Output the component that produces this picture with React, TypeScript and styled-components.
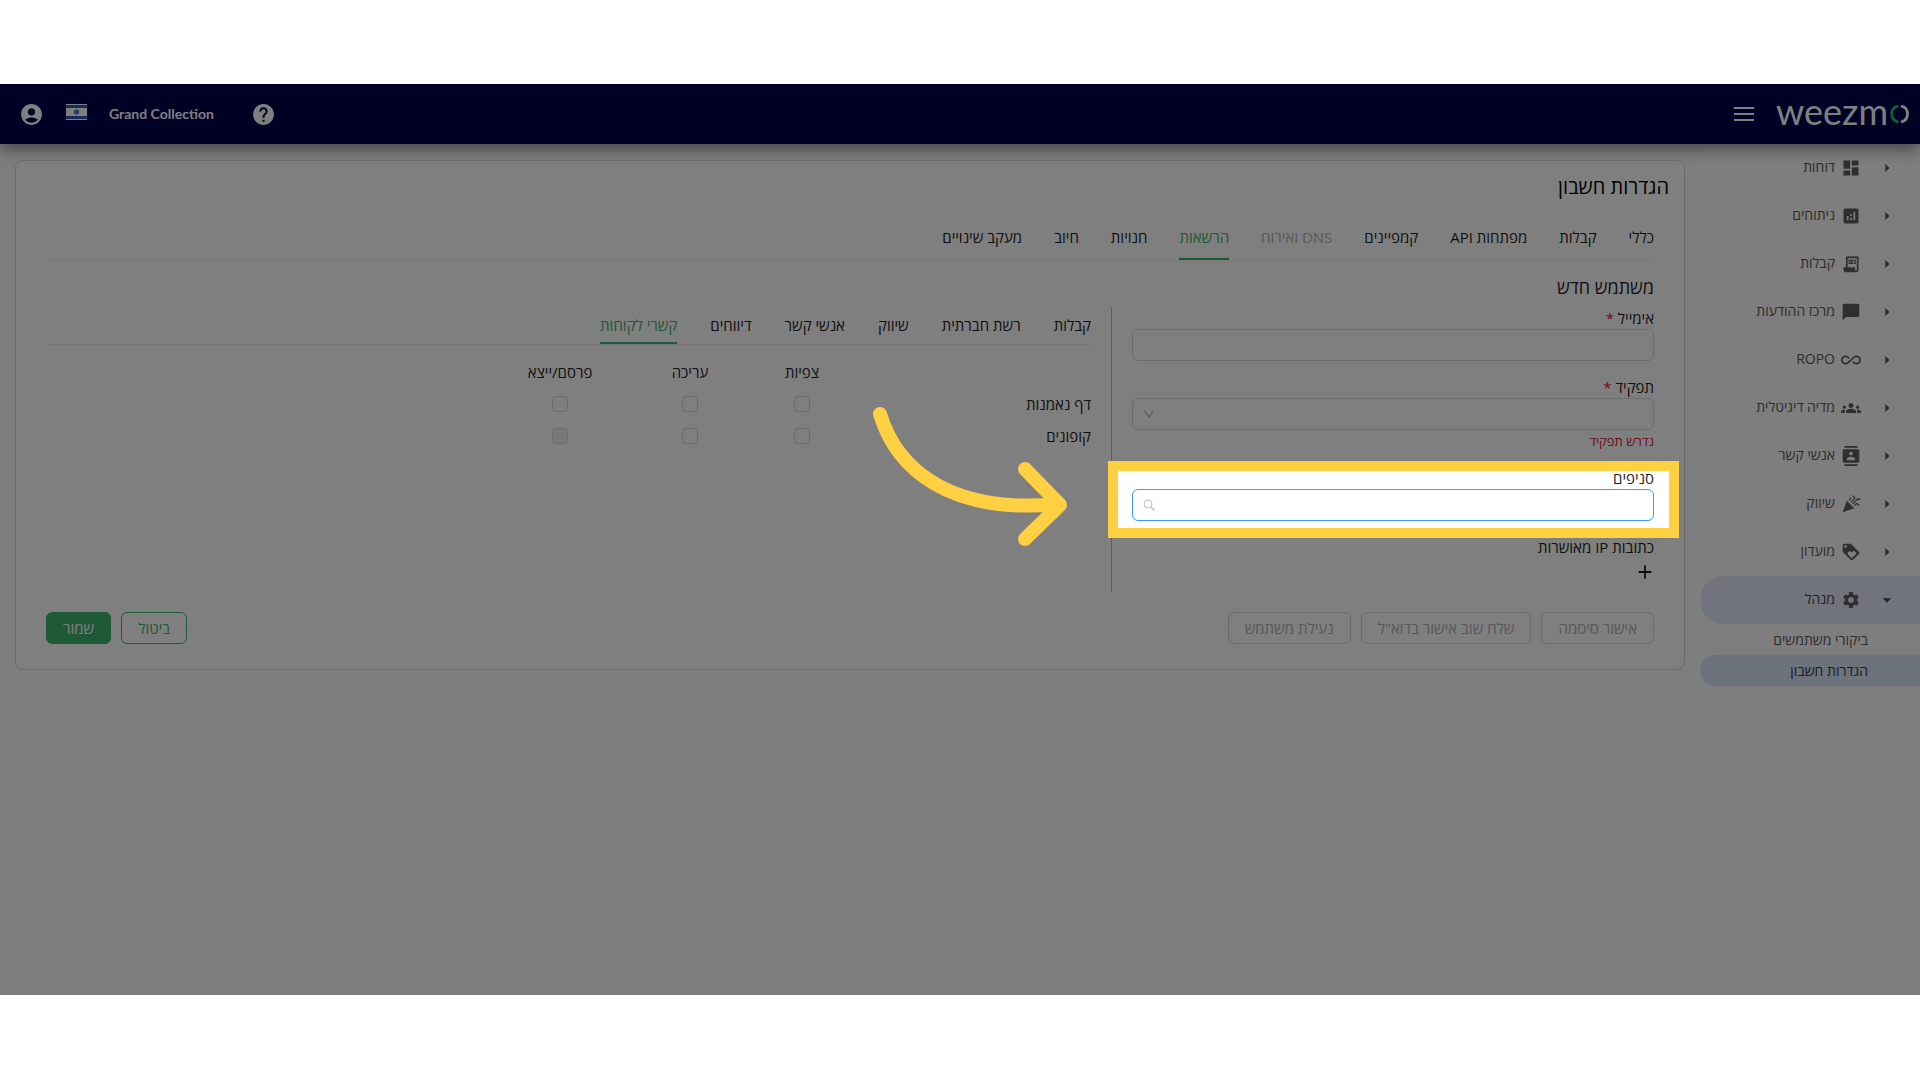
import React, { useState } from "react";
import styled, { createGlobalStyle, css } from "styled-components";
import type { IconType } from "react-icons";
import {
  MdAccountCircle,
  MdAdd,
  MdAllInclusive,
  MdAnalytics,
  MdArrowDropDown,
  MdArrowRight,
  MdCelebration,
  MdChatBubble,
  MdContacts,
  MdDashboard,
  MdGroups,
  MdHelp,
  MdLoyalty,
  MdReceiptLong,
  MdSettings,
} from "react-icons/md";

const color = {
  navy: "#00004e",
  green: "#3cb371",
  text: "#1f1f1f",
  menu: "#5a5a5a",
  muted: "#b4b4b4",
  border: "#d9d9d9",
  line: "#f0f0f0",
  error: "#e01030",
  focus: "#4096ff",
  highlight: "#ffd042",
};

const GlobalStyle = createGlobalStyle`
  *, *::before, *::after { box-sizing: border-box; }
  body {
    margin: 0;
    background: #ffffff;
    color: ${color.text};
    font-family: "Open Sans", "Noto Sans", "Liberation Sans", sans-serif;
    font-size: 15px;
    line-height: 22px;
  }
  button, input, select { font: inherit; color: inherit; }
`;

const Page = styled.div`
  min-height: 100vh;
  display: flex;
  flex-direction: column;
  padding: 84px 0 85px;
`;

const Stage = styled.div`
  position: relative;
  flex: 1;
  display: flex;
  flex-direction: column;
  overflow: hidden;
  background: #f9fefc;
`;

const TopBar = styled.header`
  position: relative;
  z-index: 1;
  display: flex;
  align-items: center;
  justify-content: space-between;
  height: 60px;
  padding: 0 11px 0 19px;
  background: ${color.navy};
  color: #ffffff;
  box-shadow: 0 4px 16px rgba(0, 0, 0, 0.5);
`;

const BarGroup = styled.div`
  display: flex;
  align-items: center;
  gap: 22px;
`;

const IconButton = styled.button`
  display: flex;
  padding: 0;
  border: 0;
  background: none;
  cursor: pointer;
`;

const Brand = styled.a`
  display: flex;
  align-items: center;
  gap: 2px;
  direction: ltr;
  color: #ffffff;
  font-family: Lato, sans-serif;
  font-size: 36px;
  font-weight: 400;
  line-height: 48px;
  text-decoration: none;
`;

const BrandWord = styled.span`
  padding-bottom: 6px;
`;

const Account = styled.span`
  margin-right: 15px;
  font-family: Lato, sans-serif;
  font-weight: 700;
  font-size: 14px;
`;

const FlagImage = styled.svg`
  margin-bottom: 4px;
`;

const Body = styled.div`
  flex: 1;
  display: flex;
`;

const Sidebar = styled.nav`
  flex: 0 0 220px;
  background: #fdfdfd;
  font-size: 14px;
`;

const MenuItem = styled.button<{ $open?: boolean }>`
  display: flex;
  align-items: center;
  width: 100%;
  height: 48px;
  padding: 0 23px 0 0;
  border: 0;
  border-radius: 24px 0 0 24px;
  background: ${(p) => (p.$open ? "#e4e9fb" : "none")};
  color: ${(p) => (p.$open ? "#444444" : color.menu)};
  cursor: pointer;
`;

const MenuIcon = styled.span`
  display: flex;
  margin: 0 16px 0 6px;
  color: #5f5f5f;
`;

const MenuLabel = styled.span`
  padding-bottom: 2px;
`;

const SubItem = styled.a<{ $active?: boolean }>`
  display: block;
  padding: 5px 52px 4px 0;
  border-radius: 16px 0 0 16px;
  background: ${(p) => (p.$active ? "#d8e6fa" : "none")};
  color: ${(p) => (p.$active ? "#3a3a3a" : color.menu)};
  text-decoration: none;
`;

const Main = styled.main`
  flex: 1;
  min-width: 0;
  padding: 16px 15px;
`;

const Card = styled.section`
  padding: 12px 30px 25px;
  border: 1px solid ${color.border};
  border-radius: 8px;
  background: #ffffff;
`;

const Title = styled.h1`
  margin: 0 -15px 14px 0;
  color: #000000;
  font-size: 20px;
  font-weight: 400;
  line-height: 28px;
`;

const Tabs = styled.div<{ $compact?: boolean }>`
  display: flex;
  gap: ${(p) => (p.$compact ? 33 : 32)}px;
  height: ${(p) => (p.$compact ? 38 : 46)}px;
  margin-left: 3px;
  border-bottom: 1px solid ${color.line};
`;

const Tab = styled.button`
  height: 100%;
  padding: 0;
  border: 0;
  border-bottom: 2px solid transparent;
  background: none;
  cursor: pointer;

  ${(p) =>
    p["aria-selected"] &&
    css`
      border-color: ${color.green};
      color: ${color.green};
    `}

  &:disabled {
    color: ${color.muted};
    cursor: default;
  }
`;

const SubTitle = styled.h2`
  margin: 14px 0 8px;
  font-size: 18px;
  font-weight: 400;
  line-height: 24px;
`;

const Columns = styled.div`
  display: grid;
  grid-template-columns: 542fr 1063fr;
`;

const FormColumn = styled.div`
  display: flex;
  flex-direction: column;
  gap: 15px;
  padding: 0 0 6px 20px;
  border-left: 1px solid #b8b8b8;
`;

const Field = styled.div`
  position: relative;
  display: flex;
  flex-direction: column;
`;

const Label = styled.label`
  align-self: flex-start;
`;

const Required = styled.span`
  color: ${color.error};
`;

const ControlBox = styled.div`
  display: grid;
  align-items: center;

  > * {
    grid-area: 1 / 1;
  }

  > svg {
    justify-self: end;
    margin-left: 11px;
    pointer-events: none;
  }
`;

const control = css<{ $focused?: boolean }>`
  width: 100%;
  height: 32px;
  padding: 0 11px;
  border: 1px solid ${(p) => (p.$focused ? color.focus : color.border)};
  border-radius: 6px;
  background: #ffffff;
  outline: none;
`;

const TextInput = styled.input<{ $focused?: boolean }>`
  ${control}
`;

const Select = styled.select<{ $focused?: boolean }>`
  ${control}
  appearance: none;
`;

const ErrorText = styled.p`
  margin: 0;
  color: ${color.error};
  font-size: 13px;
`;

const AddButton = styled(IconButton)`
  align-self: flex-start;
  align-items: center;
  height: 28px;
  margin-right: -2px;
`;

const Spotlight = styled.div`
  position: absolute;
  z-index: 10;
  inset: -6px -25px -17px -24px;
  border: 10px solid ${color.highlight};
  box-shadow: 0 0 0 3000px rgba(0, 0, 0, 0.5);
  pointer-events: none;
`;

const Arrow = styled.svg`
  position: absolute;
  z-index: 11;
  right: calc(100% + 64px);
  top: -62px;
  pointer-events: none;
`;

const Permissions = styled.div`
  padding-right: 20px;
`;

const PermissionTable = styled.table`
  margin-top: 11px;
  border-collapse: collapse;
  table-layout: fixed;

  th,
  td {
    height: 32px;
    padding: 0;
    font-weight: 400;
    text-align: center;
  }

  tbody th {
    text-align: right;
  }
`;

const Checkbox = styled.input`
  display: block;
  width: 16px;
  height: 16px;
  margin: 0 auto;
  appearance: none;
  border: 1px solid ${color.border};
  border-radius: 4px;
  background: #ffffff;

  &:checked {
    border-color: ${color.green};
    background: ${color.green};
  }

  &:disabled {
    background: #f2f2f2;
  }
`;

const Footer = styled.footer`
  display: flex;
  justify-content: space-between;
  margin-top: 20px;
`;

const Actions = styled.div`
  display: flex;
  gap: 10px;
`;

const Button = styled.button<{ $kind?: "primary" | "outline" }>`
  height: 32px;
  padding: 0 16px;
  border: 1px solid ${(p) => (p.$kind ? color.green : color.border)};
  border-radius: 6px;
  background: ${(p) => (p.$kind === "primary" ? color.green : "#ffffff")};
  color: ${(p) => (p.$kind === "primary" ? "#ffffff" : color.green)};
  cursor: pointer;

  &:disabled {
    color: #b0b0b0;
    cursor: default;
  }
`;

type MenuEntry = { label: string; icon: IconType; open?: boolean };

const menu: MenuEntry[] = [
  { label: "דוחות", icon: MdDashboard },
  { label: "ניתוחים", icon: MdAnalytics },
  { label: "קבלות", icon: MdReceiptLong },
  { label: "מרכז ההודעות", icon: MdChatBubble },
  { label: "ROPO", icon: MdAllInclusive },
  { label: "מדיה דיגיטלית", icon: MdGroups },
  { label: "אנשי קשר", icon: MdContacts },
  { label: "שיווק", icon: MdCelebration },
  { label: "מועדון", icon: MdLoyalty },
  { label: "מנהל", icon: MdSettings, open: true },
];

const accountTabs = ["כללי", "קבלות", "מפתחות API", "קמפיינים", "DNS ואירוח", "הרשאות", "חנויות", "חיוב", "מעקב שינויים"];
const permissionTabs = ["קבלות", "רשת חברתית", "שיווק", "אנשי קשר", "דיווחים", "קשרי לקוחות"];
const permissionColumns = ["צפיות", "עריכה", "פרסם/ייצא"];
const permissionRows = [
  { label: "דף נאמנות", locked: -1 },
  { label: "קופונים", locked: 2 },
];

function Flag() {
  return (
    <FlagImage width="21" height="16" viewBox="0 0 21 16" role="img" aria-label="ישראל">
      <rect width="21" height="16" fill="#ffffff" />
      <rect y="1" width="21" height="3" fill="#2a57b0" />
      <rect y="12" width="21" height="3" fill="#2a57b0" />
      <path d="M10.500 5.500l2.200 3.700H8.300z M10.500 10.500l-2.200-3.700h4.400z" fill="none" stroke="#2a57b0" />
    </FlagImage>
  );
}

function MenuLines() {
  return (
    <svg width="20" height="16" viewBox="0 0 20 16" fill="none" stroke="#ffffff" strokeWidth="2" aria-hidden>
      <path d="M0 2h20M0 8h20M0 14h20" />
    </svg>
  );
}

function BrandMark() {
  return (
    <svg width="19" height="18" viewBox="0 0 19 18" fill="none" strokeWidth="2.800" aria-hidden>
      <path d="M8.500 1C4 2 1.700 5.300 1.700 9s2.300 7 6.800 8" stroke="#12c46c" />
      <path d="M11 1c4.300 1 6.500 4.300 6.500 8s-2.200 7-6.500 8" stroke="#ffffff" />
    </svg>
  );
}

function Chevron() {
  return (
    <svg width="12" height="12" viewBox="0 0 12 12" fill="none" stroke="#b0b0b0" aria-hidden>
      <path d="M1.500 2.500L6 9l4.500-6.500" strokeWidth="1.200" />
    </svg>
  );
}

function SearchGlyph() {
  return (
    <svg width="12" height="12" viewBox="0 0 12 12" fill="none" stroke="#bcbcbc" aria-hidden>
      <circle cx="5" cy="5" r="4" />
      <path d="M8 8l3.500 3.500" strokeWidth="1.400" />
    </svg>
  );
}

function CurvedArrow() {
  return (
    <Arrow width="196" height="144" viewBox="0 0 196 144" fill="none" stroke={color.highlight} strokeWidth="14" strokeLinecap="round" strokeLinejoin="round" aria-hidden>
      <path d="M8 9c16 53 67 101 179 90" />
      <path d="M153 64l35 36-35 34" />
    </Arrow>
  );
}

export default function App() {
  const [accountTab, setAccountTab] = useState("הרשאות");
  const [permissionTab, setPermissionTab] = useState("קשרי לקוחות");

  return (
    <>
      <GlobalStyle />
      <Page dir="rtl" lang="he">
        <Stage>
          <TopBar>
            <BarGroup>
              <Brand href="#home">
                <BrandWord>weezm</BrandWord>
                <BrandMark />
              </Brand>
              <IconButton aria-label="תפריט">
                <MenuLines />
              </IconButton>
            </BarGroup>
            <BarGroup>
              <IconButton aria-label="עזרה">
                <MdHelp size={25} />
              </IconButton>
              <Account>Grand Collection</Account>
              <Flag />
              <IconButton aria-label="חשבון">
                <MdAccountCircle size={25} />
              </IconButton>
            </BarGroup>
          </TopBar>

          <Body>
            <Sidebar>
              {menu.map(({ label, icon: Icon, open }) => (
                <MenuItem key={label} $open={open} aria-expanded={!!open}>
                  {open ? <MdArrowDropDown size={20} /> : <MdArrowRight size={20} />}
                  <MenuIcon>
                    <Icon size={20} />
                  </MenuIcon>
                  <MenuLabel>{label}</MenuLabel>
                </MenuItem>
              ))}
              <SubItem href="#visits">ביקורי משתמשים</SubItem>
              <SubItem href="#account" $active>
                הגדרות חשבון
              </SubItem>
            </Sidebar>

            <Main>
              <Card>
                <Title>הגדרות חשבון</Title>
                <Tabs role="tablist">
                  {accountTabs.map((name) => (
                    <Tab
                      key={name}
                      role="tab"
                      aria-selected={name === accountTab}
                      disabled={name.startsWith("DNS")}
                      onClick={() => setAccountTab(name)}
                    >
                      {name}
                    </Tab>
                  ))}
                </Tabs>
                <SubTitle>משתמש חדש</SubTitle>

                <Columns>
                  <FormColumn>
                    <Field>
                      <Label htmlFor="email">
                        אימייל <Required>*</Required>
                      </Label>
                      <TextInput id="email" type="email" />
                    </Field>
                    <Field>
                      <Label htmlFor="role">
                        תפקיד <Required>*</Required>
                      </Label>
                      <ControlBox>
                        <Select id="role" />
                        <Chevron />
                      </ControlBox>
                      <ErrorText>נדרש תפקיד</ErrorText>
                    </Field>
                    <Field>
                      <Label htmlFor="branches">סניפים</Label>
                      <ControlBox>
                        <TextInput id="branches" type="text" $focused />
                        <SearchGlyph />
                      </ControlBox>
                      <Spotlight />
                      <CurvedArrow />
                    </Field>
                    <Field>
                      <span>כתובות IP מאושרות</span>
                      <AddButton aria-label="הוספת כתובת IP">
                        <MdAdd size={22} />
                      </AddButton>
                    </Field>
                  </FormColumn>

                  <Permissions>
                    <Tabs role="tablist" $compact>
                      {permissionTabs.map((name) => (
                        <Tab
                          key={name}
                          role="tab"
                          aria-selected={name === permissionTab}
                          onClick={() => setPermissionTab(name)}
                        >
                          {name}
                        </Tab>
                      ))}
                    </Tabs>
                    <PermissionTable>
                      <colgroup>
                        <col width="233" />
                        <col width="112" />
                        <col width="112" />
                        <col width="148" />
                      </colgroup>
                      <thead>
                        <tr>
                          <td />
                          {permissionColumns.map((name) => (
                            <th key={name} scope="col">
                              {name}
                            </th>
                          ))}
                        </tr>
                      </thead>
                      <tbody>
                        {permissionRows.map((row) => (
                          <tr key={row.label}>
                            <th scope="row">{row.label}</th>
                            {permissionColumns.map((name, i) => (
                              <td key={name}>
                                <Checkbox type="checkbox" aria-label={`${row.label} ${name}`} disabled={row.locked === i} />
                              </td>
                            ))}
                          </tr>
                        ))}
                      </tbody>
                    </PermissionTable>
                  </Permissions>
                </Columns>

                <Footer>
                  <Actions>
                    <Button disabled>אישור סיסמה</Button>
                    <Button disabled>שלח שוב אישור בדוא"ל</Button>
                    <Button disabled>נעילת משתמש</Button>
                  </Actions>
                  <Actions>
                    <Button $kind="outline">ביטול</Button>
                    <Button $kind="primary">שמור</Button>
                  </Actions>
                </Footer>
              </Card>
            </Main>
          </Body>
        </Stage>
      </Page>
    </>
  );
}
